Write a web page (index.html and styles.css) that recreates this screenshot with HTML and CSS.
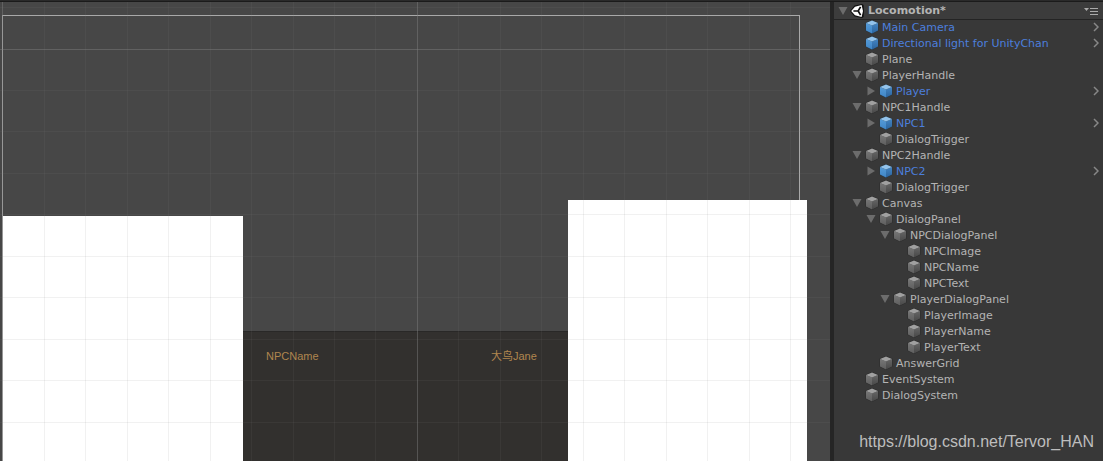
FILE: index.html
```
<!DOCTYPE html>
<html lang="en">
<head>
<meta charset="utf-8">
<title>Locomotion</title>
<link rel="stylesheet" href="styles.css">
</head>
<body>
<svg class="defs" aria-hidden="true">
  <defs>
    <linearGradient id="blue-left" x2="0" y2="1"><stop stop-color="#559bd8"/><stop offset="1" stop-color="#3f85c6"/></linearGradient>
    <linearGradient id="blue-right" x2="0" y2="1"><stop stop-color="#4384c2"/><stop offset="1" stop-color="#2c659f"/></linearGradient>
    <linearGradient id="gray-left" x2="0" y2="1"><stop stop-color="#777"/><stop offset="1" stop-color="#5e5e5e"/></linearGradient>
    <linearGradient id="gray-right" x2="0" y2="1"><stop stop-color="#666"/><stop offset="1" stop-color="#484848"/></linearGradient>
  </defs>
  <symbol id="prefab" viewBox="0 0 14 14">
    <path d="M7 0 13.4 2.5V10.7L7 14 .6 10.7V2.5Z" fill="#27343f"/>
    <path d="M1 3 7 5.4V13.4L1 10.4Z" fill="url(#blue-left)"/>
    <path d="M13 3 7 5.4V13.4L13 10.4Z" fill="url(#blue-right)"/>
    <path d="M7 .6 13 2.9 7 5.5 1 2.9Z" fill="#92c3ec"/>
  </symbol>
  <symbol id="object" viewBox="0 0 14 14">
    <path d="M7 0 13.4 2.5V10.7L7 14 .6 10.7V2.5Z" fill="#292929"/>
    <path d="M1 3 7 5.4V13.4L1 10.4Z" fill="url(#gray-left)"/>
    <path d="M13 3 7 5.4V13.4L13 10.4Z" fill="url(#gray-right)"/>
    <path d="M7 .6 13 2.9 7 5.5 1 2.9Z" fill="#a0a0a0"/>
  </symbol>
  <symbol id="open" viewBox="0 0 10 10"><path d="M.5 1H9.5L5 9Z" fill="#6c6c6c"/></symbol>
  <symbol id="closed" viewBox="0 0 10 10"><path d="M1.5 .5V9.5L9 5Z" fill="#6c6c6c"/></symbol>
  <symbol id="chevron" viewBox="0 0 6 10"><path d="M1 1 5 5 1 9" fill="none" stroke="#888" stroke-width="1.5"/></symbol>
</svg>

<div class="topbar"></div>
<div class="editor">
  <main class="scene">
    <div class="canvas-frame"></div>
    <div class="dialog"></div>
    <div class="portrait npc"></div>
    <div class="portrait player"></div>
    <svg class="grid" aria-hidden="true">
      <path class="minor" d="M44.5 0V2000M85.5 0V2000M127.5 0V2000M168.5 0V2000M210.5 0V2000M251.5 0V2000M293.5 0V2000M334.5 0V2000M375.5 0V2000M458.5 0V2000M500.5 0V2000M541.5 0V2000M583.5 0V2000M624.5 0V2000M666.5 0V2000M707.5 0V2000M749.5 0V2000M790.5 0V2000M0 5.5H4000M0 88.5H4000M0 129.5H4000M0 171.5H4000M0 212.5H4000M0 254.5H4000M0 295.5H4000M0 337.5H4000M0 378.5H4000M0 420.5H4000"/>
      <path class="major" d="M2.5 0V2000M417.5 0V2000M0 47.5H4000"/>
    </svg>
    <span class="name npc-name">NPCName</span>
    <span class="name player-name">大鸟Jane</span>
  </main>

  <aside class="hierarchy">
    <header class="scene-header">
      <button class="toggle" aria-label="Collapse Locomotion"><svg><use href="#open"/></svg></button>
      <svg class="logo" viewBox="0 0 14 14" aria-hidden="true">
        <path d="M0 7 4.5 1.5 12 0 13.6 1 14 7 13.6 13 12 14 4.5 12.5Z" fill="#111"/>
        <path d="M1.2 7 5 2.7 11.6 1 13 7 11.6 13 5 11.3Z" fill="#fff"/>
        <path d="M3.4 7H8.2L10.6 2.8M8.2 7 10.6 11.2" fill="none" stroke="#111" stroke-width="1.7"/>
      </svg>
      <h1>Locomotion*</h1>
      <button class="menu" aria-label="Scene menu"><svg viewBox="0 0 14 8"><path d="M0 1H5L2.5 4Z" fill="#aaa"/><path d="M6 1.5H14M6 4.5H14M6 7.5H14" stroke="#aaa"/></svg></button>
    </header>
    <ul class="tree">
      <li><div class="row prefab"><i></i><svg class="cube"><use href="#prefab"/></svg><span>Main Camera</span><button class="enter" aria-label="Open Main Camera"><svg><use href="#chevron"/></svg></button></div></li>
      <li><div class="row prefab"><i></i><svg class="cube"><use href="#prefab"/></svg><span>Directional light for UnityChan</span><button class="enter" aria-label="Open Directional light"><svg><use href="#chevron"/></svg></button></div></li>
      <li><div class="row"><i></i><svg class="cube"><use href="#object"/></svg><span>Plane</span></div></li>
      <li><div class="row"><button class="toggle" aria-label="Collapse PlayerHandle"><svg><use href="#open"/></svg></button><svg class="cube"><use href="#object"/></svg><span>PlayerHandle</span></div>
        <ul>
          <li><div class="row prefab"><button class="toggle" aria-label="Expand Player"><svg><use href="#closed"/></svg></button><svg class="cube"><use href="#prefab"/></svg><span>Player</span><button class="enter" aria-label="Open Player"><svg><use href="#chevron"/></svg></button></div></li>
        </ul></li>
      <li><div class="row"><button class="toggle" aria-label="Collapse NPC1Handle"><svg><use href="#open"/></svg></button><svg class="cube"><use href="#object"/></svg><span>NPC1Handle</span></div>
        <ul>
          <li><div class="row prefab"><button class="toggle" aria-label="Expand NPC1"><svg><use href="#closed"/></svg></button><svg class="cube"><use href="#prefab"/></svg><span>NPC1</span><button class="enter" aria-label="Open NPC1"><svg><use href="#chevron"/></svg></button></div></li>
          <li><div class="row"><i></i><svg class="cube"><use href="#object"/></svg><span>DialogTrigger</span></div></li>
        </ul></li>
      <li><div class="row"><button class="toggle" aria-label="Collapse NPC2Handle"><svg><use href="#open"/></svg></button><svg class="cube"><use href="#object"/></svg><span>NPC2Handle</span></div>
        <ul>
          <li><div class="row prefab"><button class="toggle" aria-label="Expand NPC2"><svg><use href="#closed"/></svg></button><svg class="cube"><use href="#prefab"/></svg><span>NPC2</span><button class="enter" aria-label="Open NPC2"><svg><use href="#chevron"/></svg></button></div></li>
          <li><div class="row"><i></i><svg class="cube"><use href="#object"/></svg><span>DialogTrigger</span></div></li>
        </ul></li>
      <li><div class="row"><button class="toggle" aria-label="Collapse Canvas"><svg><use href="#open"/></svg></button><svg class="cube"><use href="#object"/></svg><span>Canvas</span></div>
        <ul>
          <li><div class="row"><button class="toggle" aria-label="Collapse DialogPanel"><svg><use href="#open"/></svg></button><svg class="cube"><use href="#object"/></svg><span>DialogPanel</span></div>
            <ul>
              <li><div class="row"><button class="toggle" aria-label="Collapse NPCDialogPanel"><svg><use href="#open"/></svg></button><svg class="cube"><use href="#object"/></svg><span>NPCDialogPanel</span></div>
                <ul>
                  <li><div class="row"><i></i><svg class="cube"><use href="#object"/></svg><span>NPCImage</span></div></li>
                  <li><div class="row"><i></i><svg class="cube"><use href="#object"/></svg><span>NPCName</span></div></li>
                  <li><div class="row"><i></i><svg class="cube"><use href="#object"/></svg><span>NPCText</span></div></li>
                </ul></li>
              <li><div class="row"><button class="toggle" aria-label="Collapse PlayerDialogPanel"><svg><use href="#open"/></svg></button><svg class="cube"><use href="#object"/></svg><span>PlayerDialogPanel</span></div>
                <ul>
                  <li><div class="row"><i></i><svg class="cube"><use href="#object"/></svg><span>PlayerImage</span></div></li>
                  <li><div class="row"><i></i><svg class="cube"><use href="#object"/></svg><span>PlayerName</span></div></li>
                  <li><div class="row"><i></i><svg class="cube"><use href="#object"/></svg><span>PlayerText</span></div></li>
                </ul></li>
            </ul></li>
          <li><div class="row"><i></i><svg class="cube"><use href="#object"/></svg><span>AnswerGrid</span></div></li>
        </ul></li>
      <li><div class="row"><i></i><svg class="cube"><use href="#object"/></svg><span>EventSystem</span></div></li>
      <li><div class="row"><i></i><svg class="cube"><use href="#object"/></svg><span>DialogSystem</span></div></li>
    </ul>
    <p class="credit">https://blog.csdn.net/Tervor_HAN</p>
  </aside>
</div>
</body>
</html>
```
FILE: styles.css
```
* { box-sizing: border-box; }
body {
  margin: 0;
  min-height: 100vh;
  display: flex;
  flex-direction: column;
  background: #383838;
  color: #b4b4b4;
  font: 11px/14px "DejaVu Sans", sans-serif;
}
.defs { position: absolute; width: 0; height: 0; }
.topbar { height: 2px; background: #2a2a2a; border-bottom: 1px solid #1b1b1b; }
.editor { flex: 1; display: flex; }

.scene { position: relative; flex: 1; min-width: 0; overflow: hidden; background: #474747; }
.grid { position: absolute; inset: 0; width: 100%; height: 100%; fill: none; stroke: #808080; }
.minor { stroke-opacity: .11; }
.major { stroke-opacity: .45; }
.canvas-frame {
  position: absolute;
  left: 2px; top: 13px; bottom: -1px;
  width: 798px;
  border: 1px solid #a9a9a9;
}
.dialog {
  position: absolute;
  left: 3px; top: 329px; bottom: 0;
  width: 796px;
  background: #32302e;
  border-top: 1px solid #292827;
}
.portrait { position: absolute; bottom: 0; background: #fff; }
.npc { left: 3px; top: 214px; width: 240px; }
.player { left: 568px; top: 198px; width: 239px; }
.name {
  position: absolute;
  top: 347px;
  color: #b0864e;
  font-family: "Liberation Sans", "Noto Sans CJK SC", sans-serif;
}
.npc-name { left: 266px; }
.player-name { left: 491px; }

.hierarchy {
  flex: 0 0 273px;
  display: flex;
  flex-direction: column;
  border-left: 4px solid #252525;
}
.scene-header {
  display: flex;
  align-items: center;
  height: 18px;
  padding: 0 5px 0 4px;
  border-bottom: 1px solid #242424;
  background: #3c3c3c;
}
.scene-header h1 { margin: 0 auto 0 3px; font-size: 11px; line-height: 14px; }
.logo { width: 14px; height: 14px; margin-left: 2px; margin-right: 1px; }
button { padding: 0; border: 0; background: none; display: flex; }
.toggle svg { width: 10px; height: 10px; }
.menu svg { width: 14px; height: 8px; }
.tree { padding: 0 4px 0 18px; margin: 0; list-style: none; }
.tree ul { padding: 0 0 0 14px; margin: 0; list-style: none; }
.row { display: flex; align-items: center; height: 16px; padding-bottom: 2px; }
.row i { width: 10px; }
.row span { align-self: flex-start; margin-left: 3px; line-height: 16px; white-space: nowrap; }
.cube { width: 14px; height: 14px; margin-left: 3px; flex: none; }
.prefab { color: #4c7fdd; }
.enter { margin-left: auto; }
.enter svg { width: 6px; height: 10px; }
.credit {
  margin: auto 9px 9px auto;
  color: #bdbdbd;
  font: 16px/20px "Liberation Sans", sans-serif;
}
```
